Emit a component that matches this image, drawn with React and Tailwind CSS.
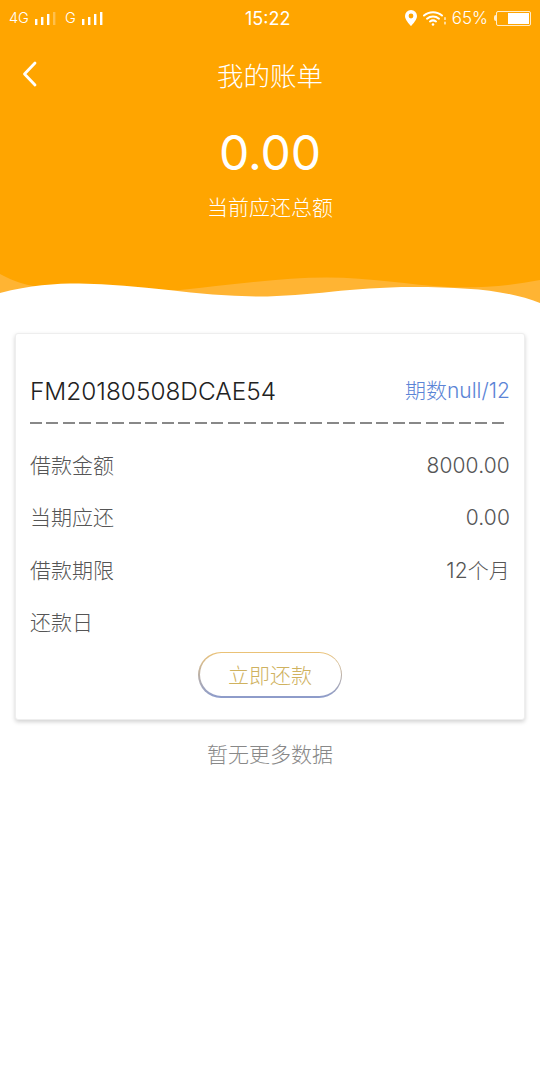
import React from 'react'

const font = { fontFamily: '"Inter", "Noto Sans CJK SC", sans-serif' }

function Bars({ dim }) {
  return (
    <svg width="21" height="13" viewBox="0 0 21 13" fill="#fff">
      <rect x="0" y="7" width="2.400" height="6" />
      <rect x="6" y="5" width="2.400" height="8" />
      <rect x="12" y="2" width="2.400" height="11" />
      <rect x="18" y="0" width="2.400" height="13" opacity={dim ? 0.3 : 1} />
    </svg>
  )
}

function StatusBar() {
  return (
    <div className="relative flex h-[36px] items-center justify-between pl-[9px] pr-[9px] text-white">
      <div className="flex items-center text-[14.500px] font-light leading-none">
        <span>4G</span>
        <span className="ml-[6px]"><Bars dim /></span>
        <span className="ml-[9px]">G</span>
        <span className="ml-[6px]"><Bars /></span>
      </div>
      <span className="absolute left-[245px] top-[7px] text-[18px] leading-[24px]">15:22</span>
      <div className="flex items-center">
        <svg width="12" height="16" viewBox="0 0 12 16">
          <path fill="#fff" fillRule="evenodd" d="M6 0a6 6 0 0 1 6 6c0 3.600-4 8-6 10C4 14 0 9.600 0 6a6 6 0 0 1 6-6zm0 3.600a2.400 2.400 0 1 0 0 4.800 2.400 2.400 0 0 0 0-4.800z" />
        </svg>
        <svg className="ml-[6px]" width="24" height="16" viewBox="0 0 24 16" fill="none" stroke="#fff" strokeWidth="2" strokeLinecap="round">
          <path d="M1 5.500C6 1 14 1 19 5.500" />
          <path d="M4 8.700c3.500-3 8.500-3 12 0" />
          <path d="M7 11.500c2-1.500 4-1.500 6 0" />
          <circle cx="10" cy="14.500" r="1.300" fill="#fff" stroke="none" />
          <path d="M22 7.500v2M22 12v2" strokeWidth="1.200" />
        </svg>
        <span className="ml-[5px] text-[17px] font-light leading-none">65%</span>
        <div className="ml-[6px] flex items-center">
          <div className="h-[6px] w-[2px] rounded-l-sm bg-white/80" />
          <div className="flex h-[15px] w-[35px] justify-end rounded-[2px] border border-white/80 p-px">
            <div className="h-full w-[21px] bg-white" />
          </div>
        </div>
      </div>
    </div>
  )
}

function Row({ label, value }) {
  return (
    <div className="flex h-[52.500px] items-center justify-between text-[21px] font-light text-[#555]">
      <span>{label}</span>
      <span className="tracking-[0.15px]">{value}</span>
    </div>
  )
}

export default function App() {
  return (
    <div className="min-h-[1080px] bg-white" style={font}>
      <header className="relative h-[305px] bg-[#ffa500] text-white">
        <StatusBar />
        <div className="relative flex h-[80px] items-center justify-center">
          <svg className="absolute left-[20px] top-[25px]" width="22" height="26" viewBox="0 0 22 26" fill="none" stroke="#fff" strokeWidth="2.800" strokeLinecap="round" strokeLinejoin="round">
            <path d="M15 2 4.500 13 15 24" />
          </svg>
          <h1 className="text-[26.500px] font-light leading-none">我的账单</h1>
        </div>
        <div className="mt-[8px] text-center text-[48px] leading-[58px]">0.00</div>
        <p className="mt-[12px] text-center text-[21px] font-light leading-[28px]">当前应还总额</p>
        <svg className="absolute bottom-0 left-0" width="540" height="35" viewBox="0 270 540 35">
          <path fill="#ffb433" d="M0 274C18 284 40 290 80 290L180 290C230 285 280 277.500 327 277.500C370 277.500 410 285 448 287C480 288 510 286 540 280V305H0Z" />
          <path fill="#fff" d="M0 293C30 285 55 283.500 79 283.500C140 284 200 296.500 258 296.500C310 296.500 350 287 413 287C470 287 510 291 540 303V305H0Z" />
        </svg>
      </header>

      <section className="mx-[15px] mt-[28px] h-[387px] rounded-[3px] border border-[#eee] bg-white px-[14px] shadow-[0_2px_4px_rgba(0,0,0,0.18)]">
        <div className="flex items-center justify-between pt-[40px]">
          <span className="text-[24.400px] font-light leading-[34px] text-[#222]">FM20180508DCAE54</span>
          <span className="text-[21px] font-light leading-[34px] text-[#5b84d6]">期数null/12</span>
        </div>
        <div className="mt-[14px] h-[2px] w-[476px] bg-[repeating-linear-gradient(90deg,#888_0,#888_12px,transparent_12px,transparent_16.500px)]" />
        <div className="mt-[15px]">
          <Row label="借款金额" value="8000.00" />
          <Row label="当期应还" value="0.00" />
          <Row label="借款期限" value="12个月" />
          <Row label="还款日" value="" />
        </div>
        <div className="mt-[2.500px] flex justify-center">
          <div className="h-[46px] w-[144px] rounded-full bg-linear-to-b from-[#ebc275] to-[#8c9bcb] p-[1.500px]">
            <button className="h-full w-full rounded-full bg-white pt-[2px] text-[21px] font-light text-[#cfb25f]">立即还款</button>
          </div>
        </div>
      </section>

      <p className="mt-[20px] text-center text-[21px] font-light leading-[30px] text-[#888]">暂无更多数据</p>
    </div>
  )
}
